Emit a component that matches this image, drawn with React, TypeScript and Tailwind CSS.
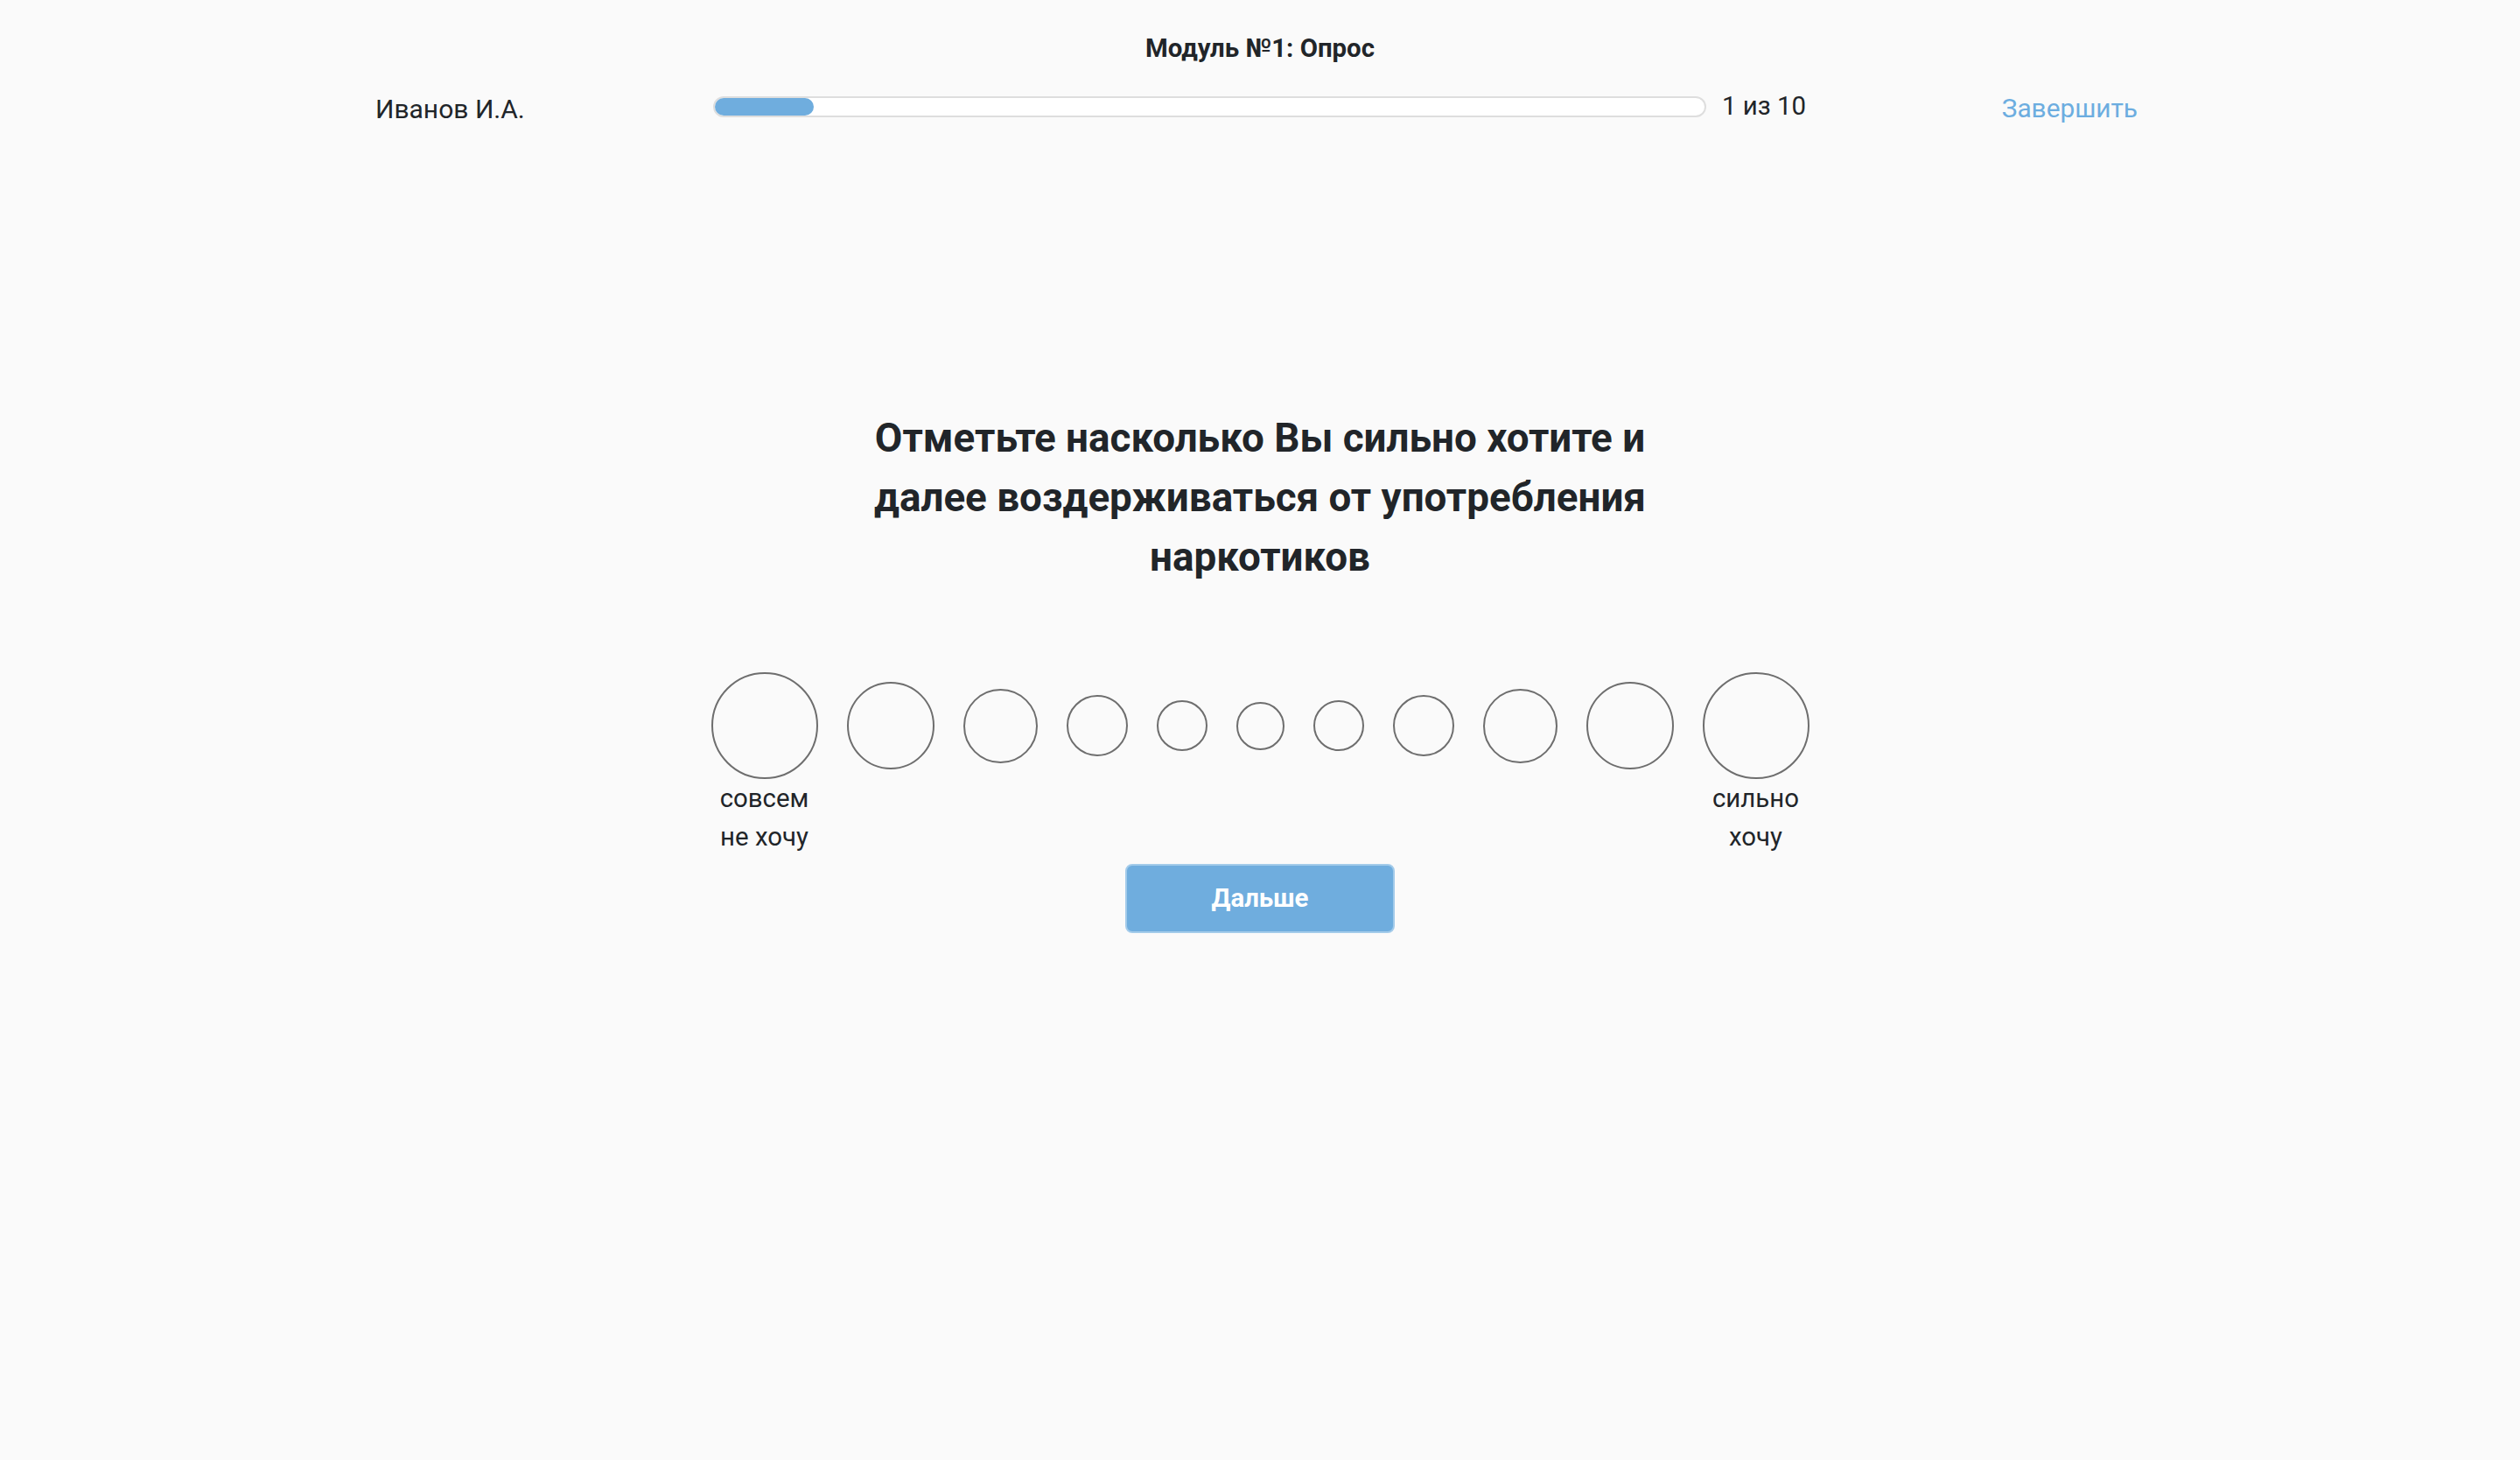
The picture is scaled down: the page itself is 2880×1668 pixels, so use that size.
import React, { useState } from "react";

const sizes = [122, 100, 85, 70, 58, 55, 58, 70, 85, 100, 122];

export default function App() {
  const [picked, setPicked] = useState<number | null>(null);

  return (
    <div className="min-h-screen bg-[#fafafa] font-['Roboto',sans-serif] text-[#212529]">
      <div className="mx-auto w-[2022px] pt-[33px]">
        <div className="text-center text-[29.4px] font-bold leading-[44px]">Модуль №1: Опрос</div>

        <div className="flex h-[90px] items-center text-[29.4px]">
          <div className="mt-[5px] w-[386px] text-[30px]">Иванов И.А.</div>
          <div className="h-[24px] w-[1135px] rounded-full border-2 border-[#dedede] bg-white">
            <div className="h-full w-[113px] rounded-full bg-[#6fadde]" />
          </div>
          <div className="-mt-[2px] ml-[18px]">1 из 10</div>
          <div className="mt-[4px] flex-1 pr-[8px] text-right">
            <a href="#" className="text-[29.8px] text-[#6cade0]">
              Завершить
            </a>
          </div>
        </div>

        <h1 className="mx-auto mt-[300px] w-[980px] text-center text-[45.8px] font-bold leading-[68px]">
          Отметьте насколько Вы сильно хотите и далее воздерживаться от употребления наркотиков
        </h1>

        <div className="mt-[97px] flex justify-center gap-[33px]">
          {sizes.map((d, i) => (
            <div key={i} className="flex flex-col items-center" style={{ width: d }}>
              <div className="flex h-[122px] items-center justify-center">
                <button
                  onClick={() => setPicked(i)}
                  className={
                    "rounded-full border-2 border-[#6e6e6e] " + (picked === i ? "bg-[#6fadde]" : "bg-transparent")
                  }
                  style={{ width: d, height: d }}
                />
              </div>
              {i === 0 && <div className="text-center text-[29.4px] leading-[44px]">совсем не хочу</div>}
              {i === sizes.length - 1 && <div className="text-center text-[29.4px] leading-[44px]">сильно хочу</div>}
            </div>
          ))}
        </div>

        <div className="mt-[9px] flex justify-center">
          <button className="h-[79px] w-[308px] rounded-[8px] border-2 border-[#a3cbea] bg-[#6fadde] text-[29.4px] font-bold text-white">
            Дальше
          </button>
        </div>
      </div>
    </div>
  );
}
